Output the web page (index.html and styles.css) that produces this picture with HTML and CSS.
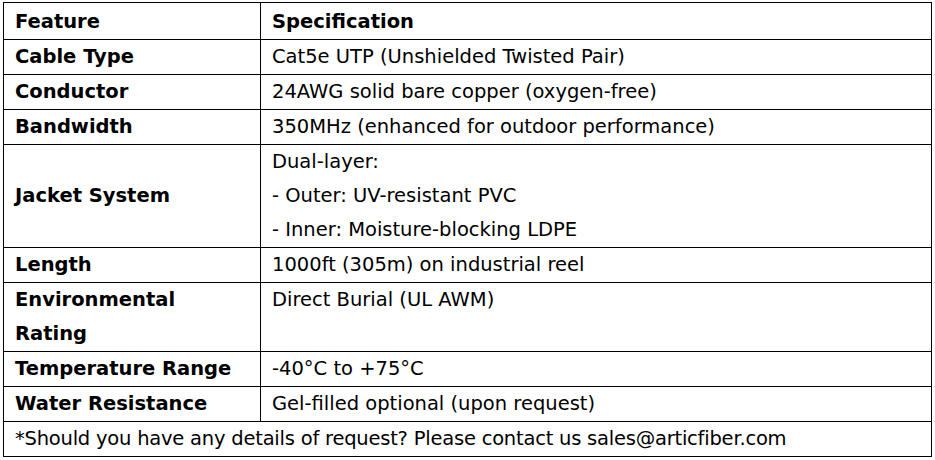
FILE: index.html
```html
<!DOCTYPE html>
<html>
<head>
<meta charset="utf-8">
<link rel="stylesheet" href="styles.css">
</head>
<body>
<table class="spec">
  <colgroup><col class="c1"><col class="c2"></colgroup>
  <tr class="head"><th>Feature</th><th>Specification</th></tr>
  <tr><th>Cable Type</th><td>Cat5e UTP (Unshielded Twisted Pair)</td></tr>
  <tr><th>Conductor</th><td>24AWG solid bare copper (oxygen-free)</td></tr>
  <tr><th>Bandwidth</th><td>350MHz (enhanced for outdoor performance)</td></tr>
  <tr><th>Jacket System</th><td>Dual-layer:<br>- Outer: UV-resistant PVC<br>- Inner: Moisture-blocking LDPE</td></tr>
  <tr><th>Length</th><td>1000ft (305m) on industrial reel</td></tr>
  <tr><th>Environmental Rating</th><td class="top">Direct Burial (UL AWM)</td></tr>
  <tr><th>Temperature Range</th><td>-40°C to +75°C</td></tr>
  <tr><th>Water Resistance</th><td>Gel-filled optional (upon request)</td></tr>
  <tr><td colspan="2" class="note">*Should you have any details of request? Please contact us sales@articfiber.com</td></tr>
</table>
</body>
</html>
```
FILE: styles.css
```css
html, body { margin: 0; padding: 0; background: #fff; }
body { padding: 2px 0 0 3px; }
.spec {
  border-collapse: collapse;
  width: 929px;
  font-family: "DejaVu Sans", "Verdana", sans-serif;
  font-size: 19.5px;
  line-height: 34px;
  color: #000;
  table-layout: fixed;
}
.c1 { width: 257px; }
.spec th, .spec td {
  border: 1px solid #000;
  padding: 0 11px;
  text-align: left;
  vertical-align: middle;
}
.spec .head th { padding-top: 2px; }
.spec th { font-weight: bold; }
.spec td { font-weight: normal; }
.spec td.top { vertical-align: top; }
.spec td.note { letter-spacing: -0.22px; }
```
